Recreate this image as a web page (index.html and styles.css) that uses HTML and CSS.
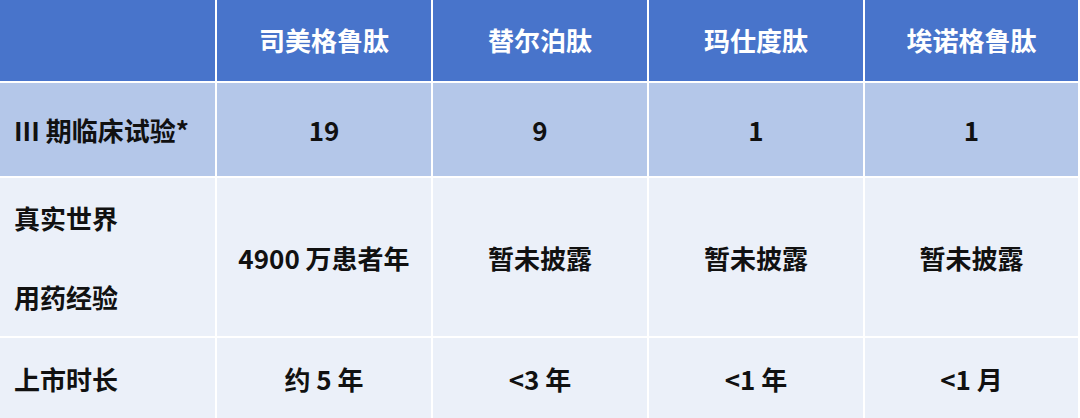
FILE: index.html
```html
<!DOCTYPE html>
<html lang="zh-CN">
<head>
<meta charset="utf-8">
<link rel="stylesheet" href="styles.css">
</head>
<body>
<div class="table">
  <div class="cell head"></div>
  <div class="cell head">司美格鲁肽</div>
  <div class="cell head">替尔泊肽</div>
  <div class="cell head">玛仕度肽</div>
  <div class="cell head">埃诺格鲁肽</div>

  <div class="cell mid label">III 期临床试验*</div>
  <div class="cell mid">19</div>
  <div class="cell mid">9</div>
  <div class="cell mid">1</div>
  <div class="cell mid">1</div>

  <div class="cell light label tall">真实世界<br>用药经验</div>
  <div class="cell light">4900 万患者年</div>
  <div class="cell light">暂未披露</div>
  <div class="cell light">暂未披露</div>
  <div class="cell light">暂未披露</div>

  <div class="cell light label">上市时长</div>
  <div class="cell light">约 5 年</div>
  <div class="cell light">&lt;3 年</div>
  <div class="cell light">&lt;1 年</div>
  <div class="cell light">&lt;1 月</div>
</div>
</body>
</html>
```
FILE: styles.css
```css
html, body {
  margin: 0;
  padding: 0;
  background: #ffffff;
}
body {
  width: 1080px;
  height: 418px;
  overflow: hidden;
  font-family: "Noto Sans CJK SC", "Noto Sans", sans-serif;
  font-weight: 700;
  font-size: 26px;
  color: #111111;
}
.table {
  display: grid;
  grid-template-columns: 215px 214px 214px 214px 213px;
  grid-template-rows: 81px 93px 158px 81px;
  gap: 2px;
  background: #ffffff;
  width: 1078px;
}
.cell {
  display: flex;
  align-items: center;
  justify-content: center;
  text-align: center;
  white-space: nowrap;
}
.head {
  background: #4874cb;
  color: #ffffff;
  padding-bottom: 2px;
}
.mid {
  background: #b4c7e9;
}
.light {
  background: #ebf0f9;
}
.label {
  justify-content: flex-start;
  text-align: left;
  padding-left: 14px;
}
.tall {
  line-height: 79px;
}
```
